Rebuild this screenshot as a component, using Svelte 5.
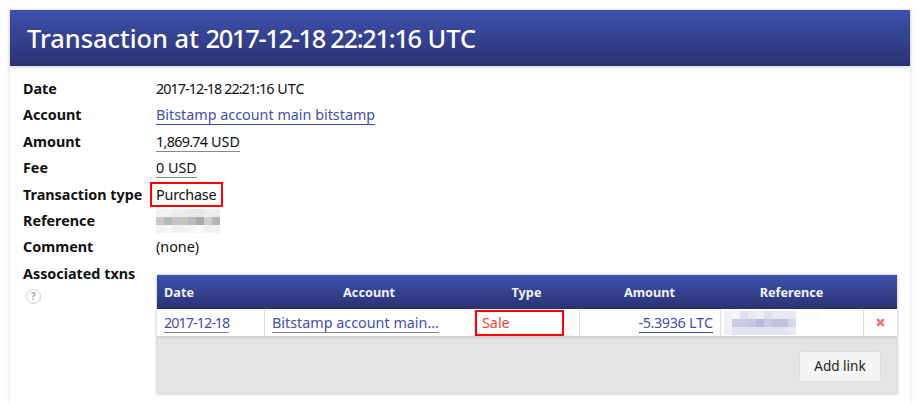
<script lang="ts">
  // blurred reference strings, drawn as pixel mosaics
  const refTop = [
    ["#f1f1f1","#f3f3ef","#ececec","#eeeeee","#e6e8ea","#e6e6e6","#ededed","#ececec"],
    ["#cdc9c9","#b4bab5","#c8c3c6","#c4c4c0","#b8bcc2","#a9a9a9","#cecece","#b5b5b5"],
    ["#f0f1f3","#f8f8f8","#f0f0f0","#f1f1f1","#f4f4f4","#fafafa","#f0f0f0","#f2f2f2"]
  ];
  const refRow = [
    ["#f0f0f8","#f5f5fa","#dedeef","#e8e8f3","#efeff6","#dedeef","#e8e8f3","#e8e8f3","#e8e8f3","#fbfbfd","#fbfbfd","#fbfbfd"],
    ["#f0f0f8","#c8cae6","#c8cae6","#c4c6e2","#b8badc","#c8cae4","#c0c2e0","#c0c2e0","#d4d6ea","#ffffff","#ffffff","#ffffff"],
    ["#eeeef6","#e2e3f0","#e2e3f0","#e2e3f0","#e2e3f0","#e2e3f0","#e2e3f0","#e2e3f0","#e8e9f3","#ffffff","#ffffff","#ffffff"]
  ];
  const rows = [
    { date: "2017-12-18", account: "Bitstamp account main...", type: "Sale", amount: "-5.3936", unit: "LTC" }
  ];
</script>

<main class="page">
  <h1>Transaction at <span class="num-title">2017-12-18 22:21:16</span> UTC</h1>
  <dl class="details">
    <dt>Date</dt>
    <dd><span class="num">2017-12-18 22:21:16</span> UTC</dd>
    <dt>Account</dt>
    <dd><a href="#account">Bitstamp account main bitstamp</a></dd>
    <dt>Amount</dt>
    <dd><span class="money"><span class="num-md">1,869.74</span> USD</span></dd>
    <dt>Fee</dt>
    <dd><span class="money">0 USD</span></dd>
    <dt>Transaction type</dt>
    <dd><span class="marked">Purchase</span></dd>
    <dt>Reference</dt>
    <dd>
      <div class="mosaic ref-top">
        {#each refTop as line}
          {#each line as c}<i style="background:{c}"></i>{/each}
        {/each}
      </div>
    </dd>
    <dt>Comment</dt>
    <dd>(none)</dd>
    <dt class="assoc">
      Associated txns
      <span class="help">?</span>
    </dt>
    <dd class="assoc-value">
      <div class="card">
        <table>
          <thead>
            <tr>
              <th class="left">Date</th>
              <th>Account</th>
              <th>Type</th>
              <th>Amount</th>
              <th>Reference</th>
              <th></th>
            </tr>
          </thead>
          <tbody>
            {#each rows as row}
              <tr>
                <td><a class="soft" href="#date"><span class="num">{row.date}</span></a></td>
                <td><a class="soft" href="#account">{row.account}</a></td>
                <td class="sale"><span class="marked-cell">{row.type}</span></td>
                <td class="amount"><a href="#amount"><span class="num-sm">{row.amount}</span> {row.unit}</a></td>
                <td class="ref-cell">
                  <div class="mosaic ref-row">
                    {#each refRow as line}
                      {#each line as c}<i style="background:{c}"></i>{/each}
                    {/each}
                  </div>
                </td>
                <td class="remove">
                  <svg width="9" height="9" viewBox="0 0 9 9"><path d="M1.2 1.2l6.6 6.6M7.8 1.2L1.2 7.8" stroke="#f87272" stroke-width="2.6" fill="none"/></svg>
                </td>
              </tr>
            {/each}
          </tbody>
        </table>
        <div class="actions">
          <button type="button">Add link</button>
        </div>
      </div>
    </dd>
  </dl>
</main>

<style>
  :global(body) {
    margin: 0;
    background: #fff;
    font-family: "Noto Sans", "Open Sans", sans-serif;
    font-size: 14.35px;
    color: #111;
  }

  .page {
    margin: 10px 9px 0 10px;
    height: 394px;
    box-shadow: 0 0 4px rgba(0, 0, 0, 0.14);
  }

  h1 {
    margin: 0;
    height: 56px;
    padding-left: 17px;
    font-size: 25.4px;
    font-weight: 500;
    line-height: 56px;
    color: #fff;
    background: linear-gradient(#3f51ad, #2a3270);
    box-shadow: 0 1px 3px rgba(0, 0, 0, 0.2);
  }

  .num-title {
    letter-spacing: -1.3px;
  }

  .num {
    letter-spacing: -0.95px;
  }

  .num-md {
    letter-spacing: -0.7px;
  }

  .num-sm {
    letter-spacing: -0.4px;
  }

  .details {
    display: grid;
    grid-template-columns: 133px 1fr;
    grid-auto-rows: 26.4px;
    margin: 0;
    padding: 10px 0 0 13px;
    line-height: 26px;
  }

  dt {
    font-weight: 700;
  }

  dd {
    margin: 0;
  }

  a {
    color: #4450ad;
    text-decoration: none;
    border-bottom: 1px solid #3f4fa8;
  }

  a.soft {
    border-bottom-color: #888;
  }

  .money {
    border-bottom: 1px solid #888;
  }

  .marked {
    display: inline-block;
    box-sizing: border-box;
    margin-left: -6px;
    padding: 0 4px;
    width: 73px;
    height: 25px;
    line-height: 21px;
    letter-spacing: -0.2px;
    border: 2px solid #f00;
  }

  .mosaic {
    display: grid;
  }

  .mosaic i {
    display: block;
  }

  .ref-top {
    grid-template-columns: repeat(8, 8px);
    grid-template-rows: repeat(3, 8px);
    margin-top: 1px;
  }

  .ref-row {
    grid-template-columns: repeat(12, 8px);
    grid-template-rows: repeat(3, 8px);
    margin-left: -4px;
  }

  .help {
    display: block;
    width: 13px;
    height: 13px;
    margin: 2px 0 0 3px;
    border: 1px solid #ccc;
    border-radius: 50%;
    color: #aaa;
    font-size: 10px;
    font-weight: 700;
    line-height: 13px;
    text-align: center;
  }

  .card {
    width: 740px;
    margin: 14px 0 0 1px;
    background: #e5e5e5;
    box-shadow: 0 0 3px rgba(0, 0, 0, 0.3);
  }

  table {
    width: 100%;
    border-collapse: separate;
    border-spacing: 0;
    table-layout: fixed;
    line-height: 20px;
  }

  th {
    box-sizing: border-box;
    height: 34px;
    padding: 0;
    font-size: 12.7px;
    font-weight: 700;
    color: #f0f0f8;
    background: linear-gradient(#3f51ad, #2a3270);
  }

  th:nth-child(1) { width: 107px; }
  th:nth-child(2) { width: 210px; }
  th:nth-child(3) { width: 105px; }
  th:nth-child(4) { width: 141px; }
  th:nth-child(5) { width: 143px; }

  th.left {
    padding-left: 7px;
    text-align: left;
  }

  td {
    box-sizing: border-box;
    height: 28px;
    padding: 1px 7px 0;
    background: #fff;
    border-left: 1px solid #ddd;
    border-bottom: 1px solid #d4d4d4;
    overflow: hidden;
    white-space: nowrap;
  }

  td:first-child {
    border-left: none;
  }

  .sale {
    padding: 1px 0 0;
    color: #f44336;
  }

  .marked-cell {
    display: block;
    box-sizing: border-box;
    height: 26px;
    line-height: 22px;
    margin: 0 15px 0 0;
    padding-left: 5px;
    border: 2px solid #f00;
  }

  .amount {
    text-align: right;
  }

  .remove {
    padding: 0;
    text-align: center;
  }

  .actions {
    display: flex;
    justify-content: flex-end;
    padding: 14px 16px 12px;
    box-shadow: inset 0 1px 2px rgba(0, 0, 0, 0.1);
  }

  button {
    width: 82px;
    height: 31px;
    padding: 0;
    font: inherit;
    font-size: 13.5px;
    color: #222;
    background: #f5f5f5;
    border: 1px solid #ddd;
    border-radius: 3px;
  }
</style>
